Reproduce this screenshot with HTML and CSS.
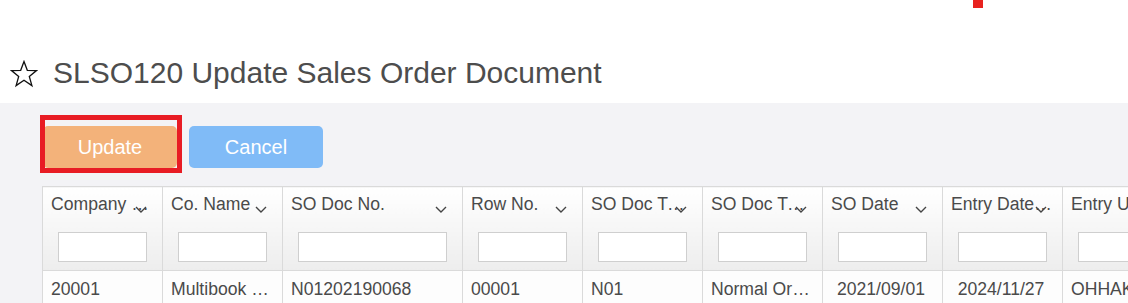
FILE: index.html
```html
<!DOCTYPE html>
<html lang="en">
<head>
  <meta charset="UTF-8">
  <title>SLSO120 Update Sales Order Document</title>
  <link rel="stylesheet" href="styles.css">
</head>
<body>
  <div class="topbar">
    <span class="brand-mark"></span>
  </div>

  <!-- Page title -->
  <div class="page-title">
    <svg class="fav-star" width="28" height="28" viewBox="0 0 28 28">
      <polygon points="14,1.5 17.3,10.3 26.5,10.6 19.3,16.4 21.9,25.6 14,20.3 6.1,25.6 8.7,16.4 1.5,10.6 10.7,10.3"
        fill="none" stroke="#111" stroke-width="1.3" stroke-linejoin="miter"/>
    </svg>
    <h1>SLSO120 Update Sales Order Document</h1>
  </div>

  <div class="panel">
    <!-- Actions -->
    <div class="actions">
      <button class="btn btn-update">Update</button>
      <button class="btn btn-cancel">Cancel</button>
      <div class="highlight"></div>
    </div>

    <!-- Grid -->
    <table class="grid">
      <colgroup>
        <col style="width:120px">
        <col style="width:120px">
        <col style="width:180px">
        <col style="width:120px">
        <col style="width:120px">
        <col style="width:120px">
        <col style="width:120px">
        <col style="width:120px">
        <col style="width:140px">
      </colgroup>
      <thead>
        <tr>
          <th><div class="th-label">Company Code</div><span class="sort"></span><input type="text"></th>
          <th><div class="th-label">Co. Name</div><span class="sort"></span><input type="text"></th>
          <th><div class="th-label">SO Doc No.</div><span class="sort"></span><input type="text"></th>
          <th><div class="th-label">Row No.</div><span class="sort"></span><input type="text"></th>
          <th><div class="th-label">SO Doc Type</div><span class="sort"></span><input type="text"></th>
          <th><div class="th-label">SO Doc Type Name</div><span class="sort"></span><input type="text"></th>
          <th><div class="th-label">SO Date</div><span class="sort"></span><input type="text"></th>
          <th><div class="th-label">Entry Date Time</div><span class="sort"></span><input type="text"></th>
          <th><div class="th-label">Entry User</div><span class="sort"></span><input type="text"></th>
        </tr>
      </thead>
      <tbody>
        <tr>
          <td>20001</td>
          <td>Multibook Co., Ltd.</td>
          <td>N01202190068</td>
          <td>00001</td>
          <td>N01</td>
          <td>Normal Order</td>
          <td class="center">2021/09/01</td>
          <td class="center">2024/11/27</td>
          <td>OHHAKO</td>
        </tr>
      </tbody>
    </table>
  </div>

  <script>
    // draw the sort chevrons
    document.querySelectorAll('.sort').forEach(s => {
      s.innerHTML = '<svg width="12" height="7" viewBox="0 0 12 7"><polyline points="1,1 6,6 11,1" fill="none" stroke="#444" stroke-width="1.4"/></svg>';
    });
  </script>
</body>
</html>
```

FILE: styles.css
```css
body {
  margin: 0;
  font-family: 'Liberation Sans', Arial, sans-serif;
  color: #4a4a4a;
  background: #ffffff;
  overflow: hidden;
}

.topbar {
  height: 8px;
}

.brand-mark {
  display: block;
  width: 10px;
  height: 8px;
  margin-left: 973px;
  background: #e8221f;
}

.page-title {
  display: flex;
  align-items: center;
  gap: 15px;
  margin: 45px 0 10px 10px;
  height: 40px;
}

.fav-star {
  flex: none;
  margin-top: 2px;
}

.page-title h1 {
  margin: 0;
  font-size: 30px;
  font-weight: normal;
  line-height: 40px;
  color: #4d4d4d;
}

.panel {
  background: #f3f3f6;
  padding: 23px 0 0 42px;
  height: 200px;
}

.actions {
  position: relative;
  display: flex;
  gap: 12px;
  padding-left: 1px;
  margin-bottom: 18px;
}

.btn {
  width: 134px;
  height: 42px;
  border: none;
  border-radius: 5px;
  color: #ffffff;
  font-family: 'Liberation Sans', Arial, sans-serif;
  font-size: 20px;
  cursor: pointer;
}

.btn-update {
  background: #f3b27a;
}

.btn-cancel {
  background: #80bbf7;
}

/* annotation box round the Update button */
.highlight {
  position: absolute;
  left: -2px;
  top: -11px;
  width: 132px;
  height: 48px;
  border: 5px solid #e81c24;
}

.grid {
  border-collapse: collapse;
  table-layout: fixed;
  width: 1160px;
}

.grid th,
.grid td {
  border: 1px solid #dadada;
  font-size: 17.6px;
  font-weight: normal;
  text-align: left;
  white-space: nowrap;
  overflow: hidden;
  text-overflow: ellipsis;
}

.grid th {
  position: relative;
  padding: 7px 15px 8px 15px;
  background: linear-gradient(to bottom, #ffffff, #ededed);
  vertical-align: top;
}

.th-label {
  line-height: 20px;
  margin-left: -7px;
  margin-right: -5.5px;
  overflow: hidden;
  text-overflow: ellipsis;
}

.sort {
  position: absolute;
  top: 19px;
  right: 15px;
  width: 12px;
  height: 7px;
  line-height: 0;
}

.grid th input {
  display: block;
  width: 100%;
  height: 30px;
  margin-top: 18px;
  box-sizing: border-box;
  border: 1px solid #cfcfcf;
  background: #ffffff;
}

.grid td {
  padding: 8px 11px 8px 8px;
  line-height: 20px;
  background: #fdfdfd;
}

.grid td.center {
  text-align: center;
}
```
